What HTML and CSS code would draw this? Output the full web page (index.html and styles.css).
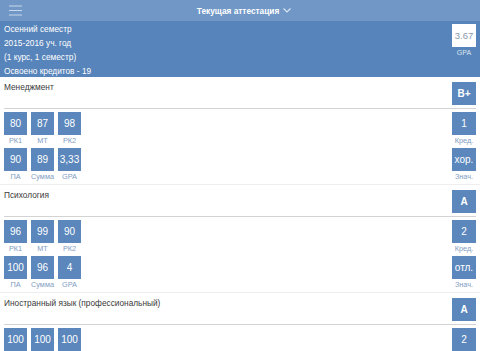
FILE: index.html
```html
<!DOCTYPE html>
<html lang="ru">
<head>
    <meta charset="UTF-8">
    <meta name="viewport" content="width=device-width, initial-scale=1.0">
    <title>Текущая аттестация</title>
    <link rel="stylesheet" href="styles.css">
</head>
<body>
    <div class="topbar">
        <div class="menu-icon">
            <svg width="13" height="11" viewBox="0 0 13 11"><path d="M0 1h13M0 5.5h13M0 10h13" stroke="#c9d8ec" stroke-width="1.1"/></svg>
        </div>
        <div class="title">Текущая аттестация
            <svg width="8" height="5" viewBox="0 0 8 5"><path d="M0.5 0.5L4 4L7.5 0.5" fill="none" stroke="#dfe8f4" stroke-width="1.1"/></svg>
        </div>
    </div>

    <div class="semester">
        <div class="semester-info">
            <div>Осенний семестр</div>
            <div>2015-2016 уч. год</div>
            <div>(1 курс, 1 семестр)</div>
            <div>Освоено кредитов - 19</div>
        </div>
        <div class="gpa">
            <div class="gpa-box">3.67</div>
            <div class="gpa-label">GPA</div>
        </div>
    </div>

    <div class="subject">
        <div class="subject-head">
            <div class="subject-name">Менеджмент</div>
            <div class="cell-box">B+</div>
        </div>
        <div class="scores">
            <div class="score-row">
                <div class="cell"><div class="cell-box">80</div><div class="cell-label">РК1</div></div>
                <div class="cell"><div class="cell-box">87</div><div class="cell-label">МТ</div></div>
                <div class="cell"><div class="cell-box">98</div><div class="cell-label">РК2</div></div>
                <div class="cell side"><div class="cell-box">1</div><div class="cell-label">Кред.</div></div>
            </div>
            <div class="score-row">
                <div class="cell"><div class="cell-box">90</div><div class="cell-label">ПА</div></div>
                <div class="cell"><div class="cell-box">89</div><div class="cell-label">Сумма</div></div>
                <div class="cell"><div class="cell-box">3,33</div><div class="cell-label">GPA</div></div>
                <div class="cell side"><div class="cell-box">хор.</div><div class="cell-label">Знач.</div></div>
            </div>
        </div>
    </div>

    <div class="subject">
        <div class="subject-head">
            <div class="subject-name">Психология</div>
            <div class="cell-box">A</div>
        </div>
        <div class="scores">
            <div class="score-row">
                <div class="cell"><div class="cell-box">96</div><div class="cell-label">РК1</div></div>
                <div class="cell"><div class="cell-box">99</div><div class="cell-label">МТ</div></div>
                <div class="cell"><div class="cell-box">90</div><div class="cell-label">РК2</div></div>
                <div class="cell side"><div class="cell-box">2</div><div class="cell-label">Кред.</div></div>
            </div>
            <div class="score-row">
                <div class="cell"><div class="cell-box">100</div><div class="cell-label">ПА</div></div>
                <div class="cell"><div class="cell-box">96</div><div class="cell-label">Сумма</div></div>
                <div class="cell"><div class="cell-box">4</div><div class="cell-label">GPA</div></div>
                <div class="cell side"><div class="cell-box">отл.</div><div class="cell-label">Знач.</div></div>
            </div>
        </div>
    </div>

    <div class="subject">
        <div class="subject-head">
            <div class="subject-name">Иностранный язык (профессиональный)</div>
            <div class="cell-box">A</div>
        </div>
        <div class="scores">
            <div class="score-row">
                <div class="cell"><div class="cell-box">100</div><div class="cell-label">РК1</div></div>
                <div class="cell"><div class="cell-box">100</div><div class="cell-label">МТ</div></div>
                <div class="cell"><div class="cell-box">100</div><div class="cell-label">РК2</div></div>
                <div class="cell side"><div class="cell-box">2</div><div class="cell-label">Кред.</div></div>
            </div>
        </div>
    </div>
</body>
</html>
```

FILE: styles.css
```css
body {
    margin: 0;
    font-family: "Liberation Sans", Arial, sans-serif;
    background-color: #ffffff;
    color: #3a3a3a;
    overflow: hidden;
}
.topbar {
    height: 21px;
    background-color: #7097c6;
    display: flex;
    align-items: center;
    justify-content: center;
    position: relative;
}
.menu-icon {
    position: absolute;
    left: 9px;
    top: 5px;
    line-height: 0;
}
.title {
    color: #ffffff;
    font-weight: bold;
    font-size: 8.3px;
    display: flex;
    align-items: center;
    gap: 4px;
    padding-left: 8px;
}
.semester {
    height: 56px;
    background-color: #5784ba;
    color: #ffffff;
    display: flex;
    justify-content: space-between;
    padding: 1px 4px 0 4px;
    box-sizing: border-box;
}
.semester-info {
    font-size: 8.3px;
    line-height: 14px;
}
.gpa {
    padding-top: 2px;
    text-align: center;
}
.gpa-box {
    width: 24px;
    height: 23px;
    background-color: #ffffff;
    color: #8797ad;
    font-size: 9.5px;
    line-height: 23px;
    text-align: center;
}
.gpa-label {
    font-size: 7px;
    line-height: 11px;
    color: #dde6f1;
}
.subject {
    border-bottom: 1px solid #eeeeee;
}
.subject-head {
    height: 31px;
    margin: 0 4px;
    display: flex;
    justify-content: space-between;
    border-bottom: 1px solid #d3d3d3;
}
.subject-name {
    font-size: 8.3px;
    line-height: 12px;
    padding-top: 4px;
}
.subject-head .cell-box {
    margin-top: 5px;
    font-weight: bold;
}
.scores {
    padding: 3px 4px 1px 4px;
    display: flex;
    flex-direction: column;
    gap: 1px;
}
.score-row {
    display: flex;
    gap: 4px;
}
.cell {
    width: 23px;
    text-align: center;
}
.cell.side {
    margin-left: auto;
    width: 24px;
}
.cell-box {
    width: 23px;
    height: 23px;
    background-color: #5b87bd;
    color: #ffffff;
    font-size: 10px;
    line-height: 23px;
    text-align: center;
}
.side .cell-box,
.subject-head .cell-box {
    width: 24px;
}
.cell-label {
    font-size: 7.3px;
    line-height: 12px;
    color: #7f9cc2;
    white-space: nowrap;
    margin: 0 -4px;
}
```
